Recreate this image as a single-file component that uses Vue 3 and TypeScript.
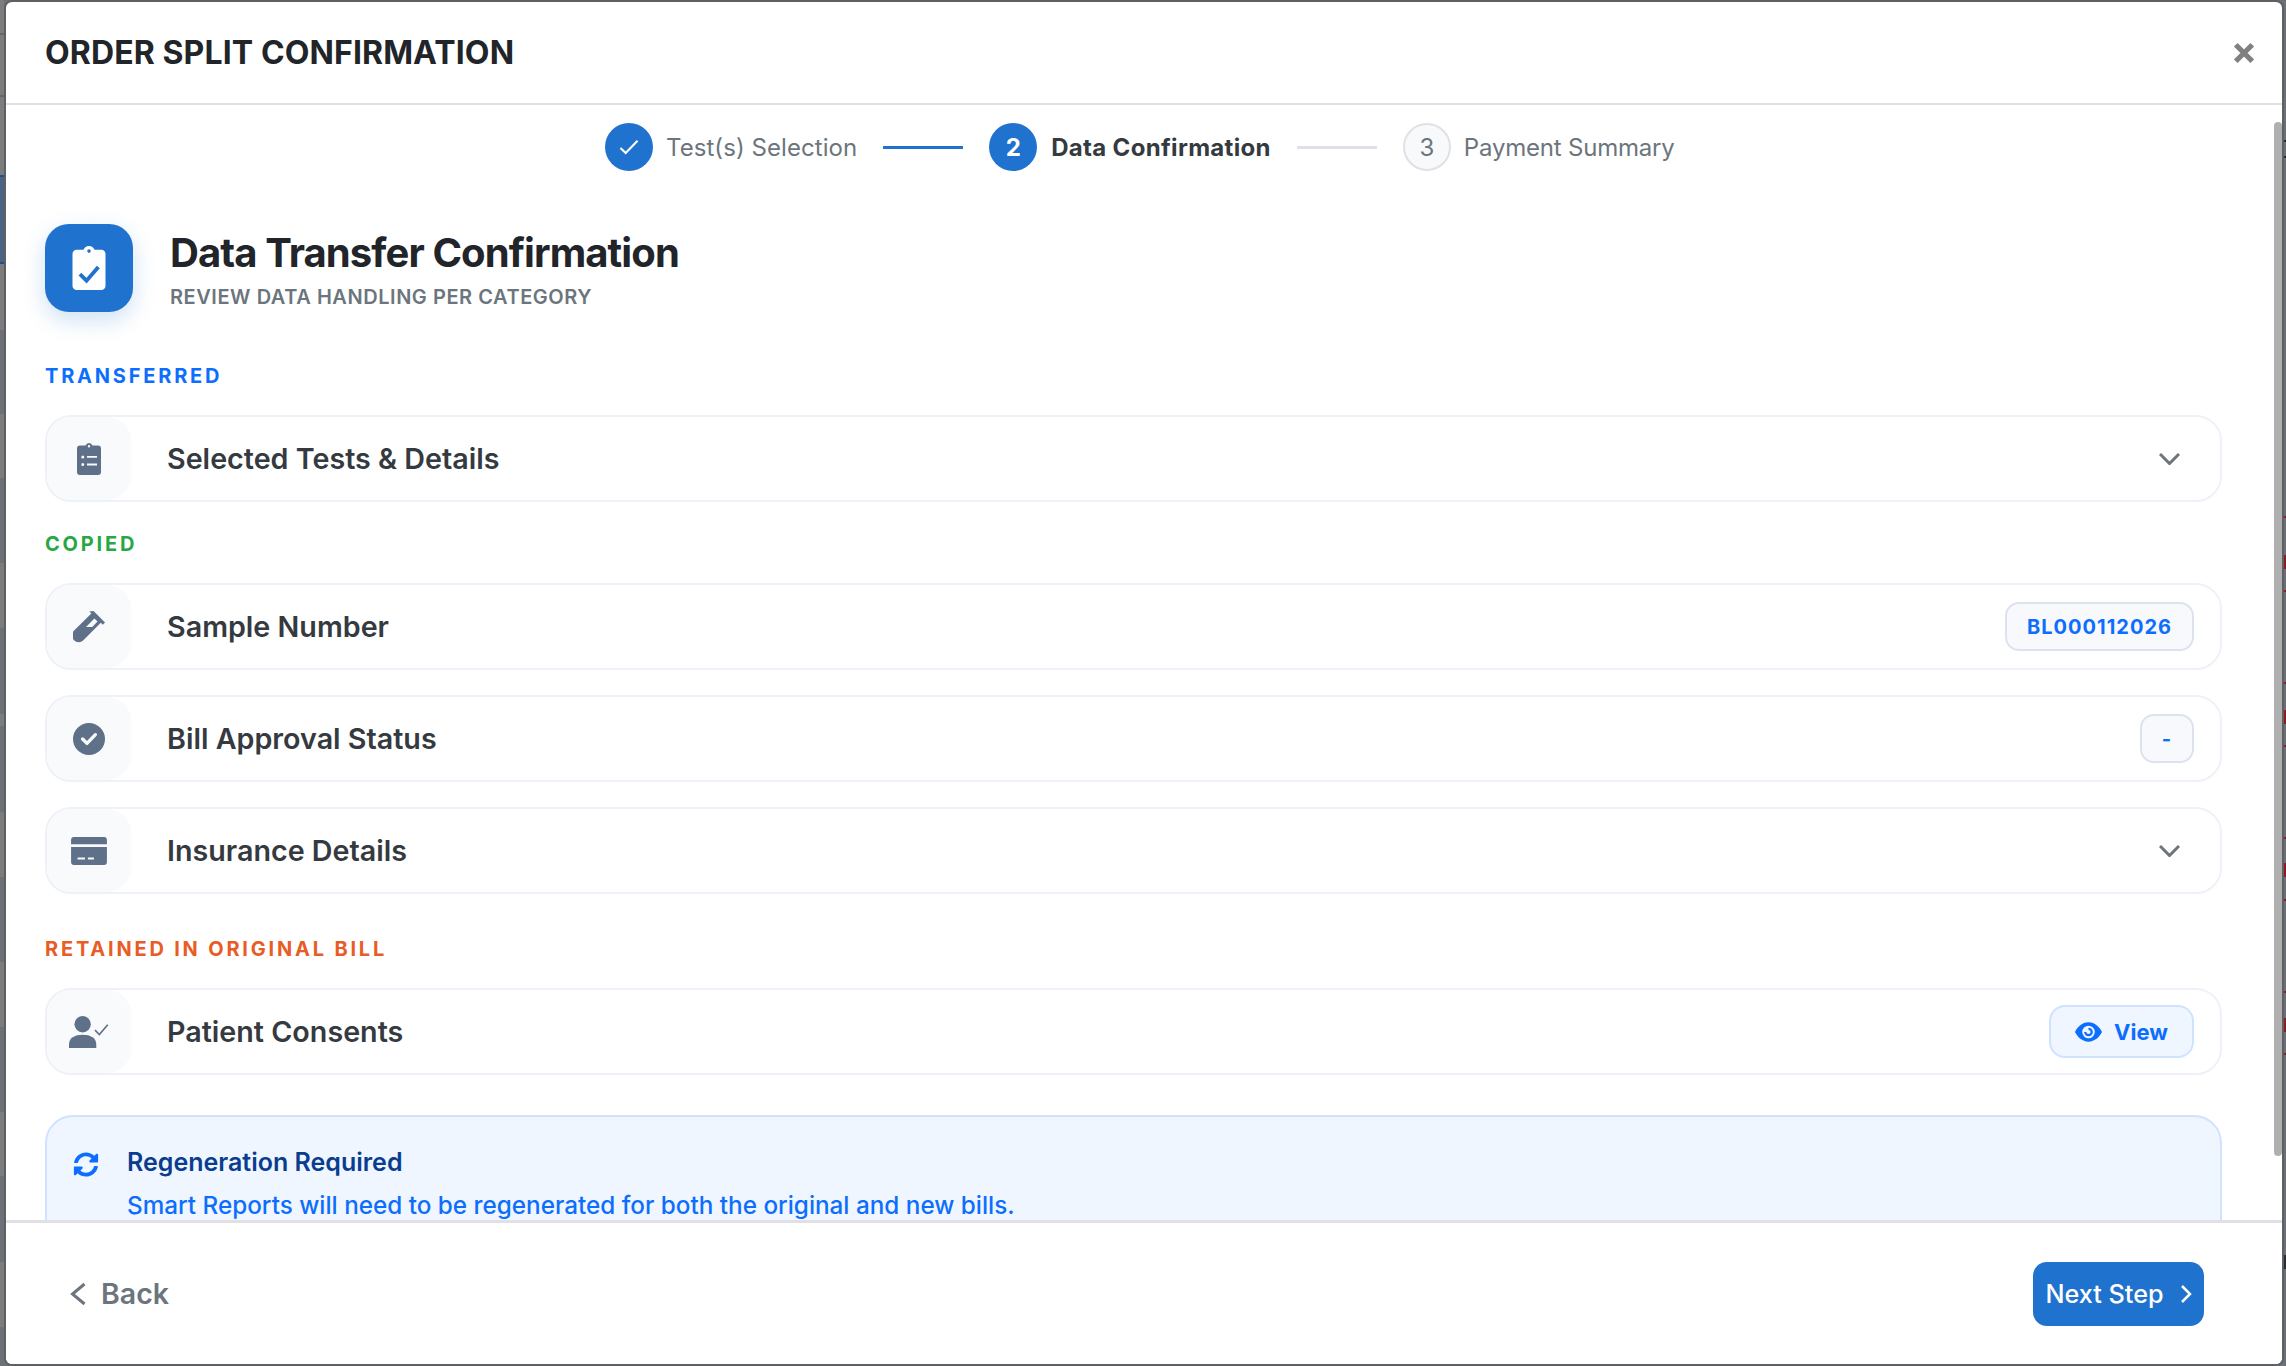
<script setup lang="ts">
type RowKind = 'chevron' | 'badge' | 'view'

interface Row {
  label: string
  icon: string
  kind: RowKind
  value?: string
}

interface Section {
  title: string
  tone: string
  rows: Row[]
}

const sections: Section[] = [
  {
    title: 'Transferred',
    tone: 'blue',
    rows: [{ label: 'Selected Tests & Details', icon: 'list', kind: 'chevron' }]
  },
  {
    title: 'Copied',
    tone: 'green',
    rows: [
      { label: 'Sample Number', icon: 'tube', kind: 'badge', value: 'BL000112026' },
      { label: 'Bill Approval Status', icon: 'check', kind: 'badge', value: '-' },
      { label: 'Insurance Details', icon: 'card', kind: 'chevron' }
    ]
  },
  {
    title: 'Retained in original bill',
    tone: 'orange',
    rows: [{ label: 'Patient Consents', icon: 'person', kind: 'view' }]
  }
]

// the page behind the modal only peeks out along the edges: [x, y, width, height, colour]
const peek: [number, number, number, number, string][] = [
  [0, 0, 4, 330, '#7c7c7c'],
  [0, 33, 4, 2, '#666'],
  [0, 95, 4, 2, '#666'],
  [0, 175, 4, 88, '#4d6384'],
  [0, 175, 4, 2, '#1f4f8f'],
  [0, 262, 4, 2, '#1f4f8f'],
  [0, 414, 4, 64, '#7c7c7c'],
  [0, 563, 4, 65, '#7c7c7c'],
  [0, 714, 4, 12, '#7c7c7c'],
  [0, 812, 4, 65, '#7c7c7c'],
  [0, 962, 4, 65, '#7c7c7c'],
  [0, 1112, 4, 64, '#7c7c7c'],
  [0, 1262, 4, 65, '#7c7c7c'],
  [292, 0, 6, 2, '#2b2b2b'],
  [369, 0, 5, 2, '#2b2b2b'],
  [484, 0, 7, 2, '#2b2b2b'],
  [496, 0, 17, 2, '#2b2b2b'],
  [523, 0, 10, 2, '#2b2b2b'],
  [669, 0, 8, 2, '#2b2b2b'],
  [687, 0, 8, 2, '#2b2b2b'],
  [701, 0, 7, 2, '#2b2b2b'],
  [2284, 140, 2, 2, '#2b2b2b'],
  [2284, 156, 2, 2, '#2b2b2b'],
  [2284, 516, 2, 2, '#8c1c2c'],
  [2284, 555, 2, 14, '#8c1c2c'],
  [2284, 590, 2, 2, '#8c1c2c'],
  [2284, 682, 2, 2, '#8c1c2c'],
  [2284, 710, 2, 14, '#8c1c2c'],
  [2284, 745, 2, 2, '#8c1c2c'],
  [2284, 837, 2, 2, '#8c1c2c'],
  [2284, 863, 2, 14, '#8c1c2c'],
  [2284, 899, 2, 2, '#8c1c2c'],
  [2284, 991, 2, 2, '#8c1c2c'],
  [2284, 1018, 2, 14, '#8c1c2c'],
  [2284, 1053, 2, 2, '#8c1c2c'],
  [2284, 1255, 2, 14, '#2b2b2b']
]

function peekStyle(p: [number, number, number, number, string]): Record<string, string> {
  return {
    left: `${p[0]}px`,
    top: `${p[1]}px`,
    width: `${p[2]}px`,
    height: `${p[3]}px`,
    background: p[4]
  }
}
</script>

<template>
  <div class="page">
    <i v-for="(p, n) in peek" :key="n" class="peek" :style="peekStyle(p)"></i>

    <div class="modal">
      <header class="head">
        <h1>ORDER SPLIT CONFIRMATION</h1>
        <svg class="close" viewBox="0 0 20 20"><path d="M2.500 2.500l15 15M17.500 2.500l-15 15" /></svg>
      </header>

      <div class="content">
        <div class="steps">
          <div class="dot done">
            <svg viewBox="0 0 16 16"><path d="M2.300 8.600l3.500 3.400 7.900-8.200" /></svg>
          </div>
          <span class="step-name">Test(s) Selection</span>
          <i class="line on"></i>
          <div class="dot active">2</div>
          <span class="step-name current">Data Confirmation</span>
          <i class="line"></i>
          <div class="dot todo">3</div>
          <span class="step-name last">Payment Summary</span>
        </div>

        <div class="intro">
          <div class="intro-icon">
            <svg viewBox="0 0 16 16">
              <path fill-rule="evenodd" d="M8 0a2.200 2.200 0 0 1 2 1.400h2.500A1.500 1.500 0 0 1 14 2.900v11.600a1.500 1.500 0 0 1-1.500 1.500h-9A1.500 1.500 0 0 1 2 14.500V2.900a1.500 1.500 0 0 1 1.500-1.500H6A2.200 2.200 0 0 1 8 0zm0 1.200a.6.6 0 1 0 0 1.300.6.6 0 0 0 0-1.300z" />
              <path class="tick" d="M4.700 10.200l2.400 2.400 4.300-5" />
            </svg>
          </div>
          <div class="intro-text">
            <h2>Data Transfer Confirmation</h2>
            <p>REVIEW DATA HANDLING PER CATEGORY</p>
          </div>
        </div>

        <section v-for="s in sections" :key="s.title" class="group">
          <h3 :class="s.tone">{{ s.title }}</h3>
          <div v-for="r in s.rows" :key="r.label" class="row">
            <div class="row-icon">
              <svg v-if="r.icon === 'list'" viewBox="0 0 16 16">
                <path fill-rule="evenodd" d="M8 0a1.800 1.800 0 0 1 1.700 1.300h2.800A1.500 1.500 0 0 1 14 2.800v11.700a1.500 1.500 0 0 1-1.500 1.500h-9A1.500 1.500 0 0 1 2 14.500V2.800a1.500 1.500 0 0 1 1.500-1.500h2.800A1.800 1.800 0 0 1 8 0zm0 1a.6.6 0 1 0 0 1.200A.6.6 0 0 0 8 1zM4.900 6.200a.75.75 0 1 0 0 1.500.75.75 0 0 0 0-1.500zM7 6.500h5v.9H7zM4.900 10a.75.75 0 1 0 0 1.500.75.75 0 0 0 0-1.500zM7 10.300h5v.9H7z" />
              </svg>
              <svg v-else-if="r.icon === 'tube'" viewBox="0.900 0.600 14.500 14.500">
                <path fill-rule="evenodd" d="M10.200.6l5.200 5.200-1 1-.9-.9-7.900 7.900a3 3 0 0 1-4.300-4.200l7.900-7.900-.9-.9zM10.600 4L6.800 7.800h2.800L12 5.400z" />
              </svg>
              <svg v-else-if="r.icon === 'check'" viewBox="0 0 16 16">
                <path fill-rule="evenodd" d="M8 0a8 8 0 1 1 0 16A8 8 0 0 1 8 0zm3.800 5.300a.8.8 0 0 0-1.200 0L7 9 5.400 7.400a.8.8 0 0 0-1.200 1.200l2.200 2.200a.8.8 0 0 0 1.200 0l4.200-4.400a.8.800 0 0 0 0-1.100z" />
              </svg>
              <svg v-else-if="r.icon === 'card'" class="card-ico" viewBox="0 0 16 12.500">
                <path fill-rule="evenodd" d="M1.300 0h13.400A1.300 1.300 0 0 1 16 1.300v1.900H0V1.300A1.300 1.300 0 0 1 1.300 0zM0 4.500h16v6.700a1.300 1.300 0 0 1-1.300 1.300H1.300A1.300 1.300 0 0 1 0 11.200zm2.900 4.700v.8h3.300v-.8zm4.600 0v.8h2.700v-.8z" />
              </svg>
              <svg v-else class="person-ico" viewBox="0 0 22 17.500">
                <circle cx="7.500" cy="4.500" r="4.500" />
                <path d="M0 17.500v-1.900C0 12 3 10.200 7.500 10.200S15 12 15 15.600v1.900z" />
                <path class="mini-tick" d="M14.300 7.700l2.400 2.400 4.600-5.300" />
              </svg>
            </div>
            <span class="row-label">{{ r.label }}</span>

            <svg v-if="r.kind === 'chevron'" class="chev" viewBox="0 0 21 12"><path d="M1 1l9.500 9.500L20 1" /></svg>
            <span v-else-if="r.kind === 'badge'" class="badge">{{ r.value }}</span>
            <button v-else class="view">
              <svg viewBox="0 0 28 20">
                <path fill-rule="evenodd" d="M14 0c6.500 0 11.500 5 14 10-2.500 5-7.500 10-14 10S2.500 15 0 10C2.500 5 7.500 0 14 0zm0 3.500a6.500 6.500 0 1 0 0 13 6.500 6.500 0 0 0 0-13z" />
                <path fill-rule="evenodd" d="M14 5.500a4.500 4.500 0 1 1-4.500 4.500h2.300a2.200 2.200 0 1 0 2.200-2.200z" />
              </svg>
              View
            </button>
          </div>
        </section>

        <div class="notice">
          <svg viewBox="0 0 512 512">
            <path d="M370.720 133.280C339.458 104.008 298.888 87.962 255.848 88c-77.458.068-144.328 53.178-162.791 126.850-1.344 5.363-6.122 9.150-11.651 9.150H24.103c-7.498 0-13.194-6.807-11.807-14.176C33.933 94.924 134.813 8 256 8c66.448 0 126.791 26.136 171.315 68.685L463.030 40.970C478.149 25.851 504 36.559 504 57.941V192c0 13.255-10.745 24-24 24H345.941c-21.382 0-32.090-25.851-16.971-40.971l41.750-41.749zM32 296h134.059c21.382 0 32.090 25.851 16.971 40.971l-41.750 41.750c31.262 29.273 71.835 45.319 114.876 45.280 77.418-.07 144.315-53.144 162.787-126.849 1.344-5.363 6.122-9.150 11.651-9.150h57.304c7.498 0 13.194 6.807 11.807 14.176C478.067 417.076 377.187 504 256 504c-66.448 0-126.791-26.136-171.315-68.685L48.970 471.030C33.851 486.149 8 475.441 8 454.059V320c0-13.255 10.745-24 24-24z" />
          </svg>
          <div>
            <strong>Regeneration Required</strong>
            <p>Smart Reports will need to be regenerated for both the original and new bills.</p>
          </div>
        </div>
      </div>

      <footer class="foot">
        <button class="back">
          <svg viewBox="0 0 16 24"><path d="M14.500 2L2.500 12l12 10" /></svg>
          Back
        </button>
        <button class="next">
          Next Step
          <svg viewBox="0 0 12 20"><path d="M2 2l8 8-8 8" /></svg>
        </button>
      </footer>

      <div class="scroll-thumb"></div>
    </div>
  </div>
</template>

<style>
html,
body {
  margin: 0;
  background: #6c7077;
}
</style>

<style scoped>
.page {
  position: relative;
  width: 2286px;
  height: 1366px;
  box-sizing: border-box;
  padding: 0 2px 0 4px;
  font-family: Inter, 'Liberation Sans', sans-serif;
  overflow: hidden;
}

.peek {
  position: absolute;
}

.modal {
  position: relative;
  height: 100%;
  box-sizing: border-box;
  background: #fff;
  border: 2px solid #5e6064;
  border-radius: 8px;
  display: flex;
  flex-direction: column;
  overflow: hidden;
}

.head {
  flex: none;
  height: 103px;
  box-sizing: border-box;
  display: flex;
  align-items: center;
  justify-content: space-between;
  padding: 0 27px 0 39px;
  border-bottom: 2px solid #e0e0e6;
}

.head h1 {
  margin: 0;
  font-size: 32px;
  font-weight: 700;
  letter-spacing: 0.12px;
  color: #212529;
}

.close {
  width: 22px;
  height: 22px;
  fill: none;
  stroke: #808080;
  stroke-width: 4.800;
}

.content {
  flex: 1;
  min-height: 0;
  overflow: hidden;
  padding: 18px 60px 0 39px;
}

.steps {
  display: flex;
  align-items: center;
  padding-left: 560px;
  height: 48px;
}

.dot {
  width: 48px;
  height: 48px;
  box-sizing: border-box;
  border-radius: 50%;
  display: flex;
  align-items: center;
  justify-content: center;
  font-size: 24px;
  flex: none;
}

.done,
.active {
  background: #1f72cd;
  color: #fff;
  font-weight: 700;
}

.done svg {
  width: 24px;
  height: 24px;
  fill: none;
  stroke: #fff;
  stroke-width: 1.400;
}

.todo {
  background: #f8f9fa;
  border: 2px solid #e0e0e6;
  color: #6c757d;
}

.step-name {
  margin-left: 13px;
  font-size: 24px;
  letter-spacing: 0.06px;
  color: #6c757d;
  white-space: nowrap;
}

.current {
  margin-left: 14px;
  font-weight: 700;
  letter-spacing: 0.32px;
  color: #343a40;
}

.last {
  margin-left: 13px;
  letter-spacing: -0.2px;
}

.line {
  width: 80px;
  height: 3px;
  margin: 0 26px;
  background: #e0e0e6;
}

.line.on {
  background: #1f72cd;
}

.intro {
  margin-top: 53px;
  display: flex;
  align-items: center;
  gap: 37px;
}

.intro-icon {
  width: 88px;
  height: 88px;
  border-radius: 24px;
  background: #1f72cd;
  box-shadow: 0 8px 22px rgba(31, 114, 205, 0.22);
  display: flex;
  align-items: center;
  justify-content: center;
}

.intro-icon svg {
  width: 44px;
  height: 44px;
  fill: #fff;
}

.tick {
  fill: none;
  stroke: #1f72cd;
  stroke-width: 1.400;
}

.intro-text {
  padding-top: 2px;
}

.intro h2 {
  margin: 0;
  font-size: 40px;
  line-height: 48px;
  font-weight: 700;
  letter-spacing: -0.9px;
  color: #212529;
}

.intro p {
  margin: 8px 0 0;
  font-size: 20px;
  line-height: 24px;
  font-weight: 600;
  letter-spacing: 0.55px;
  color: #6c757d;
}

.group {
  margin-bottom: 43px;
}

.group:first-of-type {
  margin-top: 52px;
  margin-bottom: 30px;
}

.group:last-of-type {
  margin-bottom: 40px;
}

.group h3 {
  margin: 0 0 27px;
  font-size: 20px;
  line-height: 24px;
  font-weight: 700;
  letter-spacing: 2.8px;
  text-transform: uppercase;
}

.blue {
  color: #0d6efd;
}

.green {
  color: #28a745;
}

.orange {
  color: #e85d26;
}

.row {
  display: flex;
  align-items: center;
  height: 87px;
  box-sizing: border-box;
  border: 2px solid #eef2f8;
  border-radius: 26px;
  padding-right: 26px;
  margin-bottom: 25px;
}

.row:last-child {
  margin-bottom: 0;
}

.row-icon {
  width: 84px;
  height: 83px;
  flex: none;
  background: #f8fafc;
  border-radius: 24px;
  display: flex;
  align-items: center;
  justify-content: center;
}

.row-icon svg {
  width: 32px;
  height: 32px;
  fill: #5f7089;
}

.row-icon .card-ico {
  width: 36px;
  height: 28px;
}

.row-icon .person-ico {
  width: 40px;
  height: 32px;
}

.mini-tick {
  fill: none;
  stroke: #5f7089;
  stroke-width: 0.9;
}

.row-label {
  flex: 1;
  margin-left: 36px;
  font-size: 28.700px;
  font-weight: 600;
  color: #343a40;
}

.chev {
  width: 21px;
  height: 12px;
  margin-right: 14px;
  fill: none;
  stroke: #6c757d;
  stroke-width: 3;
}

.badge {
  min-width: 53px;
  box-sizing: border-box;
  height: 49px;
  padding: 0 20px;
  display: flex;
  align-items: center;
  justify-content: center;
  background: #f8f9fc;
  border: 2px solid #dde3ee;
  border-radius: 14px;
  font-size: 20px;
  font-weight: 700;
  letter-spacing: 1px;
  color: #0d6efd;
}

.view {
  height: 53px;
  width: 145px;
  display: flex;
  align-items: center;
  justify-content: center;
  gap: 12px;
  background: #eff6ff;
  border: 2px solid #cfe2ff;
  border-radius: 16px;
  font-family: inherit;
  font-size: 22px;
  font-weight: 700;
  color: #0d6efd;
}

.view svg {
  width: 27px;
  height: 20px;
  fill: #0d6efd;
}

.notice {
  display: flex;
  gap: 28px;
  padding: 30px 26px 40px;
  background: #eff6ff;
  border: 2px solid #cfe2ff;
  border-radius: 28px;
}

.notice svg {
  width: 26px;
  height: 25px;
  flex: none;
  margin-top: 5px;
  fill: #0d6efd;
}

.notice strong {
  display: block;
  font-size: 25px;
  line-height: 30px;
  font-weight: 600;
  color: #0a3d8f;
}

.notice p {
  margin: 13px 0 0;
  font-size: 24.280px;
  line-height: 30px;
  font-weight: 500;
  color: #0d6efd;
}

.foot {
  flex: none;
  height: 144px;
  box-sizing: border-box;
  border-top: 3px solid #e0e0e6;
  display: flex;
  align-items: center;
  justify-content: space-between;
  padding: 0 78px 0 64px;
  background: #fff;
  position: relative;
}

.foot button {
  display: flex;
  align-items: center;
  font-family: inherit;
  border: 0;
}

.back {
  gap: 15px;
  background: none;
  padding: 0;
  font-size: 28.500px;
  font-weight: 600;
  color: #6c757d;
}

.back svg {
  width: 16px;
  height: 24px;
  fill: none;
  stroke: #6c757d;
  stroke-width: 3;
}

.next {
  height: 64px;
  width: 171px;
  justify-content: center;
  gap: 16px;
  background: #1f72cd;
  border-radius: 14px;
  font-size: 25.200px;
  font-weight: 500;
  color: #fff;
}

.next svg {
  width: 12px;
  height: 20px;
  fill: none;
  stroke: #fff;
  stroke-width: 2.500;
}

.scroll-thumb {
  position: absolute;
  top: 120px;
  right: 0;
  width: 8px;
  height: 1034px;
  border-radius: 4px;
  background: #b0b0b0;
}
</style>
